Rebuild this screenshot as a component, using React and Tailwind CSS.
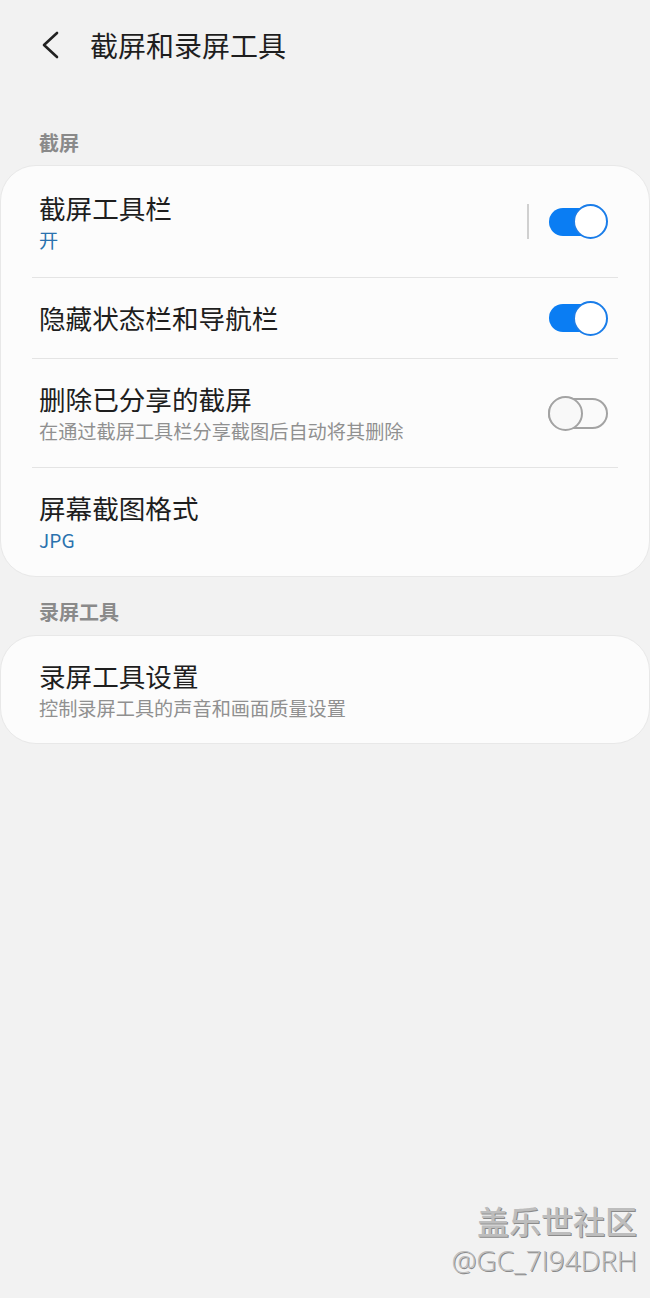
import React from 'react';

const font = { fontFamily: '"Noto Sans CJK SC", "Noto Sans", sans-serif' };

function Toggle({ on }) {
  if (on) {
    return (
      <div className="relative w-[59px] h-[35px] flex items-center">
        <div className="w-[50px] h-[28px] rounded-full bg-[#0a7df3]" />
        <div className="absolute right-0 top-0 w-[35px] h-[35px] rounded-full bg-white border-2 border-[#1a7de9]" />
      </div>
    );
  }
  return (
    <div className="relative w-[60px] h-[35px] flex items-center">
      <div className="w-[60px] h-[31px] rounded-full border-2 border-[#a3a3a3] bg-[#fafafa]" />
      <div className="absolute left-0 top-0 w-[35px] h-[35px] rounded-full bg-[#f8f8f8] border-2 border-[#a3a3a3]" />
    </div>
  );
}

function Row({ h, title, sub, subBlue, right }) {
  return (
    <div className={`flex items-center pl-[38px] pr-[41px] ${h}`}>
      <div className="flex-1 flex flex-col">
        <div className="text-[26.6px] leading-[34px] text-[#1e1e1e]">{title}</div>
        {sub && (
          <div
            className={`mt-[2px] text-[19.2px] leading-[26px] ${subBlue ? 'text-[#2a72ae]' : 'text-[#909090]'}`}
          >
            {sub}
          </div>
        )}
      </div>
      {right}
    </div>
  );
}

function Divider() {
  return <div className="mx-[31px] h-px bg-[#e4e4e4]" />;
}

export default function App() {
  return (
    <div className="relative min-h-[1298px] bg-[#f2f2f2]" style={font}>
      {/* Header */}
      <div className="h-[90px] flex items-center">
        <svg className="ml-[40px]" width="22" height="30" viewBox="0 0 22 30" fill="none">
          <polyline points="17,3 4,15 17,27" stroke="#222" strokeWidth="2.6" strokeLinecap="round" strokeLinejoin="round" />
        </svg>
        <h1 className="ml-[28px] text-[28px] leading-[36px] text-[#1e1e1e]">截屏和录屏工具</h1>
      </div>

      {/* Screenshot section */}
      <div className="mt-[39px] mb-[8px] pl-[39px] text-[20px] leading-[28px] font-bold text-[#8a8a8a]">截屏</div>
      <div className="bg-[#fcfcfc] border border-[#e8e8e8] rounded-[36px]">
        <Row
          h="h-[111px]"
          title="截屏工具栏"
          sub="开"
          subBlue
          right={
            <div className="flex items-center">
              <div className="w-[2px] h-[35px] bg-[#d0d0d0] mr-[20px]" />
              <Toggle on />
            </div>
          }
        />
        <Divider />
        <Row h="h-[80px]" title="隐藏状态栏和导航栏" right={<Toggle on />} />
        <Divider />
        <Row
          h="h-[108px]"
          title="删除已分享的截屏"
          sub="在通过截屏工具栏分享截图后自动将其删除"
          right={<Toggle on={false} />}
        />
        <Divider />
        <Row h="h-[108px]" title="屏幕截图格式" sub="JPG" subBlue />
      </div>

      {/* Screen recorder section */}
      <div className="mt-[21px] mb-[9px] pl-[39px] text-[20px] leading-[28px] font-bold text-[#8a8a8a]">录屏工具</div>
      <div className="bg-[#fcfcfc] border border-[#e8e8e8] rounded-[36px]">
        <Row h="h-[107px]" title="录屏工具设置" sub="控制录屏工具的声音和画面质量设置" />
      </div>

      {/* Watermark */}
      <div className="absolute right-[13px] top-[1199px] flex flex-col items-end text-[#bdbdbd]">
        <div
          className="text-[32px] leading-[42px] font-medium"
          style={{ textShadow: '1px 1px 0 #8a8a8a' }}
        >
          盖乐世社区
        </div>
        <div
          className="text-[28px] leading-[38px] font-light"
          style={{ textShadow: '1px 1px 0 #8a8a8a', fontFamily: '"Open Sans", "Noto Sans", sans-serif' }}
        >
          @GC_7I94DRH
        </div>
      </div>
    </div>
  );
}
